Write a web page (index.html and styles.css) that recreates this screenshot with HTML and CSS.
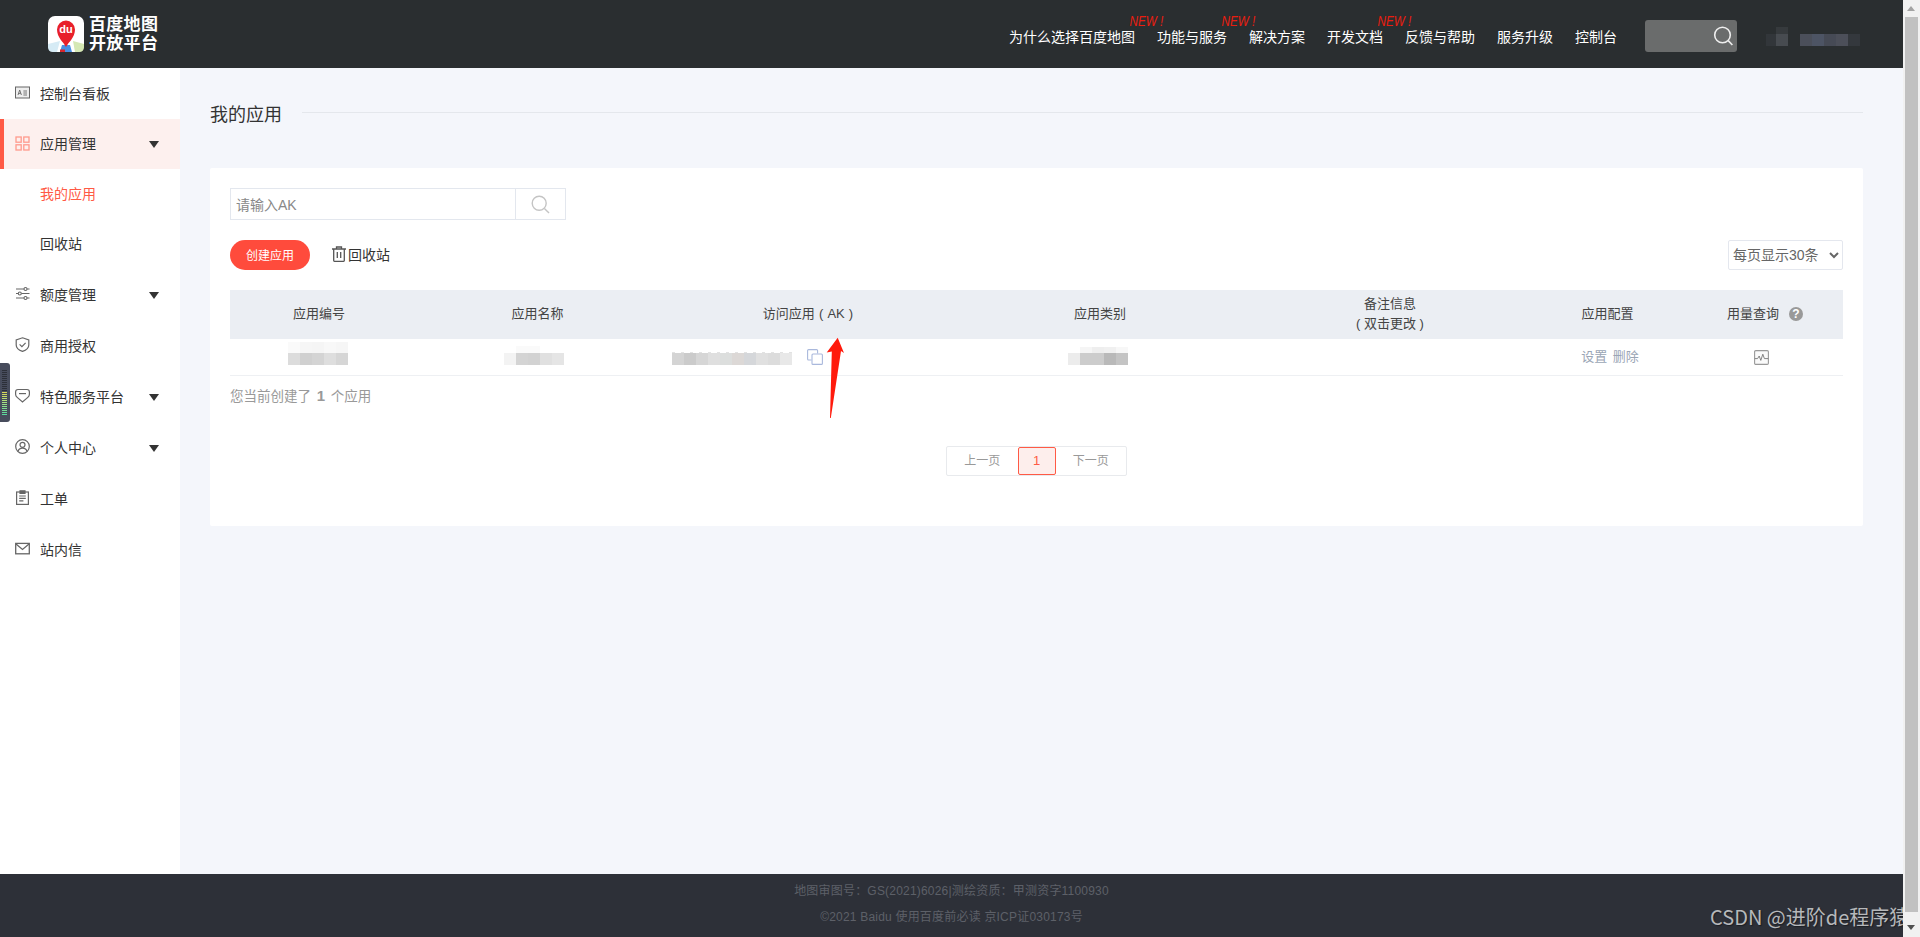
FILE: index.html
```html
<!DOCTYPE html>
<html lang="zh-CN">
<head>
<meta charset="utf-8">
<title>我的应用 - 百度地图开放平台</title>
<link rel="stylesheet" href="styles.css">
</head>
<body>
<div class="page">
  <div class="shell">
    <header class="topbar">
      <a class="brand">
        <svg class="brand-mark" width="36" height="36" viewBox="0 0 36 36">
          <rect width="36" height="36" rx="7" fill="#fff"/>
          <path d="M0 28 L12 25 L9 36 L5 36 Q0 36 0 31Z" fill="#d6ebf5"/>
          <path d="M25 25 L36 28 L36 31 Q36 36 31 36 L27 36Z" fill="#d5e8b4"/>
          <path d="M12 36 L14 29 H22 L24 36Z" fill="#4a90e2"/>
          <rect x="12" y="33.5" width="5" height="2.5" fill="#d8262c"/>
          <path d="M18 31 C15.5 26 9 21.5 9 13.5 A9 9 0 0 1 27 13.5 C27 21.5 20.5 26 18 31Z" fill="#e8202a"/>
          <text class="brand-du" x="18" y="17" text-anchor="middle">du</text>
        </svg>
        <span class="brand-name">百度地图<br>开放平台</span>
      </a>
      <nav class="topnav">
        <a class="topnav-item">为什么选择百度地图<em class="flag">NEW !</em></a>
        <a class="topnav-item">功能与服务<em class="flag">NEW !</em></a>
        <a class="topnav-item">解决方案</a>
        <a class="topnav-item">开发文档<em class="flag">NEW !</em></a>
        <a class="topnav-item">反馈与帮助</a>
        <a class="topnav-item">服务升级</a>
        <a class="topnav-item">控制台</a>
      </nav>
      <div class="topsearch">
        <svg width="21" height="20" viewBox="0 0 21 20" fill="none" stroke="#eee" stroke-width="1.6"><circle cx="9.5" cy="9" r="7.8"/><path d="M15.2 14.6 L19.4 19"/></svg>
      </div>
      <div class="account" aria-hidden="true"></div>
    </header>

    <div class="body-row">
      <aside class="sidebar">
        <a class="side-item">
          <svg class="side-icon" viewBox="0 0 15 15"><rect x=".5" y="2" width="14" height="11" fill="#eee" stroke="#666"/><path d="M3 10 L4.7 5 L6.4 10 M3.7 8.4 H5.7 M8.4 6 H12 M8.4 8 H12 M8.4 10 H12" fill="none" stroke="#666" stroke-width=".9"/></svg>
          控制台看板
        </a>
        <a class="side-item side-item-open">
          <svg class="side-icon" viewBox="0 0 15 15" fill="none" stroke="#ff9a8d" stroke-width="1.3"><rect x="1" y="1" width="5.2" height="5.2"/><rect x="8.8" y="1" width="5.2" height="5.2"/><rect x="1" y="8.8" width="5.2" height="5.2"/><rect x="8.8" y="8.8" width="5.2" height="5.2"/></svg>
          应用管理<i class="caret"></i>
        </a>
        <div class="side-sub">
          <a class="side-subitem side-subitem-on">我的应用</a>
          <a class="side-subitem">回收站</a>
        </div>
        <a class="side-item">
          <svg class="side-icon" viewBox="0 0 15 15" fill="none" stroke="#666" stroke-width="1.1"><path d="M1 3 H9 M12 3 H14.5 M1 7.5 H3 M6.5 7.5 H14.5 M1 12 H9 M12 12 H14.5"/><circle cx="10.5" cy="3" r="1.5"/><circle cx="4.8" cy="7.5" r="1.5"/><circle cx="10.5" cy="12" r="1.5"/></svg>
          额度管理<i class="caret"></i>
        </a>
        <a class="side-item">
          <svg class="side-icon" viewBox="0 0 15 15" fill="none" stroke="#666" stroke-width="1.2"><path d="M7.5 .8 L13.8 3 V8 C13.8 11 10.5 13.4 7.5 14.4 C4.5 13.4 1.2 11 1.2 8 V3Z"/><path d="M4.6 7.4 L6.9 9.6 L10.6 5.8"/></svg>
          商用授权
        </a>
        <a class="side-item">
          <svg class="side-icon" viewBox="0 0 15 15" fill="none" stroke="#666" stroke-width="1.2"><path d="M3 1.5 H12 Q14.4 1.5 14.4 4 V6.2 Q14.4 8 12.8 9.4 L7.5 14 L2.2 9.4 Q.6 8 .6 6.2 V4 Q.6 1.5 3 1.5Z"/><path d="M4 5.6 H11"/></svg>
          特色服务平台<i class="caret"></i>
        </a>
        <a class="side-item">
          <svg class="side-icon" viewBox="0 0 15 15" fill="none" stroke="#666" stroke-width="1.2"><circle cx="7.5" cy="7.5" r="6.8"/><circle cx="7.5" cy="5.8" r="2.5"/><path d="M3.2 12.4 C3.6 10 5.4 9.2 7.5 9.2 C9.6 9.2 11.4 10 11.8 12.4"/></svg>
          个人中心<i class="caret"></i>
        </a>
        <a class="side-item">
          <svg class="side-icon" viewBox="0 0 15 15" fill="none" stroke="#666" stroke-width="1.2"><rect x="1.6" y="2" width="11.8" height="12.4"/><path d="M5 .8 H10 V3.4 H5Z" fill="#666"/><path d="M4.2 6 H10.8 M4.2 8.4 H10.8 M4.2 10.8 H8.4"/></svg>
          工单
        </a>
        <a class="side-item">
          <svg class="side-icon" viewBox="0 0 15 15" fill="none" stroke="#666" stroke-width="1.3"><rect x=".7" y="2.4" width="13.6" height="10.4"/><path d="M1 3 L7.5 8.4 L14 3"/></svg>
          站内信
        </a>
      </aside>

      <main class="content">
        <div class="page-head">
          <h1 class="page-title">我的应用</h1>
          <span class="page-rule"></span>
        </div>

        <section class="card">
          <form class="ak-search">
            <input class="ak-input" type="text" placeholder="请输入AK">
            <span class="ak-submit">
              <svg width="19" height="19" viewBox="0 0 19 19" fill="none" stroke="#c4c4c4" stroke-width="1.4"><circle cx="8.2" cy="8.2" r="7"/><path d="M13.4 13.4 L18 18"/></svg>
            </span>
          </form>

          <div class="toolbar">
            <a class="btn-create">创建应用</a>
            <a class="btn-bin">
              <svg width="14" height="16" viewBox="0 0 14 16" fill="none" stroke="#555" stroke-width="1.3"><path d="M0 3 H14 M4.5 3 V1 H9.5 V3"/><path d="M1.7 3 V14.6 Q1.7 15.3 2.4 15.3 H11.6 Q12.3 15.3 12.3 14.6 V3"/><path d="M5.3 6 V12 M8.7 6 V12"/></svg>
              回收站
            </a>
            <select class="page-size">
              <option>每页显示30条</option>
            </select>
          </div>

          <div class="grid-row grid-head">
            <div>应用编号</div>
            <div>应用名称</div>
            <div class="ak-head">访问应用 ( AK )</div>
            <div>应用类别</div>
            <div class="note-head">备注信息<br>( 双击更改 )</div>
            <div class="config-head">应用配置</div>
            <div class="usage-head">用量查询<span class="help">?</span></div>
          </div>
          <div class="grid-row grid-body">
            <div class="cell-masked"><span class="mask mask-id"></span></div>
            <div class="cell-masked"><span class="mask mask-name"></span></div>
            <div class="cell-masked"><span class="mask mask-ak"></span>
              <svg class="copy-icon" width="16" height="16" viewBox="0 0 16 16" fill="none" stroke="#a9b8dc" stroke-width="1.1"><path d="M4.5 11 H1.5 Q.6 11 .6 10 V1.6 Q.6 .6 1.6 .6 H9.6 Q10.6 .6 10.6 1.6 V4.5"/><rect x="5" y="5" width="10.4" height="10.4" rx="1"/></svg>
            </div>
            <div class="cell-masked"><span class="mask mask-type"></span></div>
            <div></div>
            <div class="ops"><a>设置</a> <a>删除</a></div>
            <div class="usage-cell">
              <svg width="15" height="15" viewBox="0 0 15 15" fill="#fafafa" stroke="#999" stroke-width="1.1"><rect x=".6" y=".6" width="13.8" height="13.8" rx="1.2"/><path d="M.8 8.6 H3.6 L5.2 6 L6.8 10.4 L8.8 4.2 L10.4 8.6 H14.2" fill="none" stroke="#777" stroke-width=".9"/></svg>
            </div>
          </div>

          <p class="app-count">您当前创建了 <b>1</b> 个应用</p>

          <div class="pager-wrap">
            <div class="pager">
              <a class="pager-step">上一页</a>
              <a class="pager-num">1</a>
              <a class="pager-step">下一页</a>
            </div>
          </div>

          <svg class="callout-arrow" width="20" height="82" viewBox="0 0 20 82"><path d="M11.7 .7 L18 16 L15 14 L4.8 81 L4 81 L5.8 14.6 L.7 15.4Z" fill="#ff1a0c"/></svg>
        </section>
      </main>
    </div>

    <footer class="footer">
      <p>地图审图号：GS(2021)6026|测绘资质：甲测资字1100930</p>
      <p>©2021 Baidu 使用百度前必读 京ICP证030173号</p>
      <span class="watermark">CSDN @进阶de程序猿</span>
    </footer>
  </div>

  <div class="scrollbar" aria-hidden="true">
    <i class="scroll-up"></i>
    <span class="scroll-thumb"></span>
    <i class="scroll-down"></i>
  </div>
</div>

<div class="volume-tab" aria-hidden="true"><span class="volume-ticks"></span></div>
</body>
</html>
```
FILE: styles.css
```css
* { box-sizing: border-box; }

html, body { height: 100%; }

body {
  margin: 0;
  overflow: hidden;
  font-family: "Liberation Sans", "Noto Sans CJK SC", sans-serif;
  font-size: 14px;
  color: #333;
  background: #f4f6fb;
}

a { color: inherit; text-decoration: none; }

.page { display: flex; height: 937px; }

.shell {
  width: 1903px;
  display: flex;
  flex-direction: column;
}

/* top bar */
.topbar {
  height: 68px;
  flex: none;
  display: flex;
  align-items: center;
  padding-left: 48px;
  background: #2a2e30;
}

.brand { display: flex; align-items: center; }
.brand-mark { display: block; }
.brand-du { font: bold 11px "Liberation Sans", sans-serif; fill: #fff; }

.brand-name {
  margin-left: 5px;
  font-size: 17px;
  font-weight: 700;
  line-height: 19px;
  letter-spacing: .3px;
  color: #fff;
}

.topnav {
  display: flex;
  gap: 22px;
  margin-left: auto;
  padding-top: 5px;
}

.topnav-item {
  position: relative;
  line-height: 20px;
  color: #fff;
  white-space: nowrap;
}

.flag {
  position: absolute;
  right: -28px;
  top: -14px;
  font: italic 15px/16px "Liberation Sans", sans-serif;
  color: #ea1d0f;
  transform: scaleX(.78);
  transform-origin: 100% 50%;
}

.topsearch {
  width: 92px;
  height: 32px;
  margin: 4px 0 0 28px;
  padding-right: 3px;
  display: flex;
  align-items: center;
  justify-content: flex-end;
  border-radius: 3px;
  background: #6a6c6c;
}

.account {
  width: 94px;
  height: 22px;
  margin: 8px 43px 0 29px;
  background:
    linear-gradient(#363a3d, #363a3d) 10px 0 / 12px 7px no-repeat,
    linear-gradient(90deg, #32363a 0 10px, #474b50 10px 22px, transparent 22px 34px,
      #4b4f5a 34px 46px, #4d5464 46px 58px, #464a55 58px 70px, #4c4f59 70px 82px, #34383d 82px 94px)
      0 7px / 94px 12px no-repeat;
}

.body-row { flex: 1; display: flex; min-height: 0; }

/* side menu */
.sidebar {
  width: 180px;
  flex: none;
  background: #fff;
}

.side-item {
  position: relative;
  height: 51px;
  display: flex;
  align-items: center;
  padding: 0 0 2px 15px;
  color: #333;
}

.side-icon { width: 15px; height: 15px; margin-right: 10px; flex: none; }

.side-item-open {
  height: 50px;
  padding-left: 11px;
  border-left: 4px solid #ff5a45;
  background: #fdf0ee;
}

.caret {
  position: absolute;
  left: 149px;
  top: 50%;
  margin-top: -3px;
  border-style: solid;
  border-width: 7px 5px 0;
  border-color: #333 transparent transparent;
}

.side-item-open .caret { left: 145px; }

.side-subitem {
  height: 50px;
  display: flex;
  align-items: center;
  padding: 0 0 2px 40px;
}

.side-subitem-on { color: #ff5a45; }

/* main column */
.content {
  flex: 1;
  min-width: 0;
  padding: 30px 40px 0 30px;
}

.page-head {
  height: 30px;
  display: flex;
  align-items: center;
  margin-bottom: 40px;
}

.page-title {
  margin: 0 20px 0 0;
  padding-top: 3px;
  font-size: 18px;
  font-weight: 400;
  line-height: 30px;
  color: #333;
}

.page-rule { flex: 1; height: 1px; margin-top: -1px; background: #e4e7ec; }

.card {
  position: relative;
  height: 358px;
  padding: 20px;
  border-radius: 2px;
  background: #fff;
}

.ak-search {
  width: 336px;
  height: 32px;
  display: flex;
  margin: 0;
  border: 1px solid #e3e7ee;
}

.ak-input {
  width: 285px;
  height: 30px;
  padding: 2px 5px 0;
  border: 0;
  border-right: 1px solid #e3e7ee;
  outline: 0;
  font: inherit;
  color: #333;
}

.ak-input::placeholder { color: #888; opacity: 1; }

.ak-submit {
  flex: 1;
  display: flex;
  align-items: center;
  justify-content: center;
}

.toolbar {
  height: 30px;
  display: flex;
  align-items: center;
  margin: 20px 0;
}

.btn-create {
  width: 80px;
  height: 30px;
  border-radius: 15px;
  font-size: 12px;
  line-height: 32px;
  text-align: center;
  color: #fff;
  background: #ff4b3c;
}

.btn-bin {
  display: flex;
  align-items: center;
  gap: 2px;
  margin-left: 22px;
  padding-bottom: 2px;
  color: #333;
}

.page-size {
  width: 115px;
  height: 30px;
  margin-left: auto;
  padding: 0;
  border: 1px solid #e4e7ee;
  border-radius: 2px;
  outline: 0;
  font: inherit;
  color: #666;
  background: #fff;
}

/* application list */
.grid-row {
  display: grid;
  grid-template-columns: 178px 259px 282px 302px 288px 135px 169px;
  font-size: 13px;
}

.grid-head {
  height: 49px;
  padding-bottom: 2px;
  align-items: center;
  line-height: 20px;
  text-align: center;
  color: #444;
  background: #ebeef3;
}

.ak-head { word-spacing: .5px; }
.note-head { padding-right: 10px; }
.config-head { padding-left: 2px; }

.usage-head {
  display: flex;
  align-items: center;
  justify-content: center;
  padding-left: 13px;
}

.help {
  width: 14px;
  height: 14px;
  margin-left: 10px;
  border-radius: 50%;
  font-size: 12px;
  font-weight: 700;
  line-height: 14px;
  text-align: center;
  color: #fff;
  background: #999;
}

.grid-body {
  height: 37px;
  border-bottom: 1px solid #eef0f3;
}

.cell-masked {
  display: flex;
  align-items: flex-end;
  padding-bottom: 10px;
}

.mask { display: block; }

.mask-id {
  width: 60px;
  height: 23px;
  margin-left: 58px;
  background:
    linear-gradient(90deg, #fafafa 0 12px, #f6f6f6 12px 24px, #f5f5f5 24px 36px, #f8f8f8 36px 48px, #f6f6f6 48px 60px) 0 0 / 60px 11px no-repeat,
    linear-gradient(90deg, #dcdcdc 0 12px, #d0d0d0 12px 24px, #d4d4d4 24px 36px, #dedede 36px 48px, #d6d6d6 48px 60px) 0 11px / 60px 12px no-repeat;
}

.mask-name {
  width: 60px;
  height: 19px;
  margin-left: 96px;
  background:
    linear-gradient(90deg, #fff 0 12px, #fafafa 12px 36px, #fff 36px 60px) 0 0 / 60px 7px no-repeat,
    linear-gradient(90deg, #f3f3f3 0 12px, #d4d4d4 12px 24px, #d2d2d2 24px 36px, #e0e0e0 36px 48px, #e5e5e5 48px 60px) 0 7px / 60px 12px no-repeat;
}

.mask-ak {
  width: 120px;
  height: 13px;
  margin-left: 5px;
  background:
    repeating-linear-gradient(90deg, #e2e2e2 0 3px, #fff 3px 9px) 0 0 / 120px 1px no-repeat,
    linear-gradient(90deg, #d4d4d4 0 12px, #cbcbcb 12px 24px, #d6d6d6 24px 36px, #dfdfdf 36px 48px, #dcdedd 48px 60px,
      #dcd8d6 60px 72px, #d5d7da 72px 84px, #e0e0e0 84px 96px, #dcdcdc 96px 108px, #e8e8e8 108px 120px) 0 1px / 120px 12px no-repeat;
}

.copy-icon { margin-left: 15px; }

.mask-type {
  width: 60px;
  height: 18px;
  margin-left: 119px;
  background:
    linear-gradient(90deg, #fff 0 12px, #f5f5f5 12px 24px, #eee 24px 36px, #f0f0f0 36px 48px, #f7f7f7 48px 60px) 0 0 / 60px 6px no-repeat,
    linear-gradient(90deg, #ececec 0 12px, #ccc 12px 36px, #b9b9b9 36px 48px, #c4c4c4 48px 60px) 0 6px / 60px 12px no-repeat;
}

.ops {
  padding: 8px 0 0 7px;
  line-height: 20px;
  word-spacing: 2px;
  text-align: center;
  color: #9aa5b5;
}

.usage-cell {
  display: flex;
  justify-content: center;
  padding: 11px 0 0 5px;
}

.app-count {
  margin: 10px 0 0;
  font-size: 13.5px;
  line-height: 20px;
  color: #999;
}

.app-count b { margin: 0 2px; font-size: 15px; }

.pager-wrap {
  display: flex;
  justify-content: center;
  margin-top: 39px;
}

.pager {
  display: flex;
  height: 30px;
  border: 1px solid #e8eaed;
  border-radius: 2px;
  font-size: 12px;
  line-height: 28px;
  color: #999;
}

.pager-step { width: 70.5px; text-align: center; }

.pager-num {
  width: 38px;
  font-size: 13px;
  line-height: 26px;
  text-align: center;
  border: 1px solid #ff5a45;
  border-radius: 2px;
  color: #ff5a45;
  background: #fdeeec;
}

.callout-arrow {
  position: absolute;
  left: 616px;
  top: 169px;
}

/* page footer */
.footer {
  position: relative;
  height: 63px;
  flex: none;
  overflow: hidden;
  padding-top: 7px;
  text-align: center;
  font-size: 12px;
  letter-spacing: .2px;
  color: #5d6068;
  background: #2d3038;
}

.footer p { margin: 0 0 6px; line-height: 20px; }

.watermark {
  position: absolute;
  left: 1710px;
  top: 29px;
  font-family: "Noto Sans CJK SC", sans-serif;
  font-size: 20px;
  line-height: 28px;
  letter-spacing: 0;
  white-space: nowrap;
  color: #b6b8ba;
  text-shadow: 1px 1px 1px #1c1e24;
}

/* window scrollbar */
.scrollbar {
  position: relative;
  width: 17px;
  background: #f1f1f1;
}

.scroll-thumb {
  position: absolute;
  left: 2px;
  top: 17px;
  width: 13px;
  height: 895px;
  background: #c1c1c1;
}

.scroll-up,
.scroll-down {
  position: absolute;
  left: 4px;
  border-style: solid;
  border-color: transparent;
}

.scroll-up {
  top: 6px;
  border-width: 0 4px 5px;
  border-bottom-color: #a3a3a3;
}

.scroll-down {
  top: 925px;
  border-width: 5px 4px 0;
  border-top-color: #505050;
}

/* docked volume tab on the window edge */
.volume-tab {
  position: fixed;
  left: 0;
  top: 363px;
  width: 10px;
  height: 59px;
  padding: 7px 0 6px 2px;
  border-radius: 0 3px 3px 0;
  background: #474c5c;
}

.volume-ticks {
  display: block;
  width: 5px;
  height: 100%;
  background:
    repeating-linear-gradient(transparent 0 1px, #474c5c 1px 2px),
    linear-gradient(#2c2f38 0 46%, #e0d850 46%, #a8e080 70%, #4fd8a0 100%);
}
```
